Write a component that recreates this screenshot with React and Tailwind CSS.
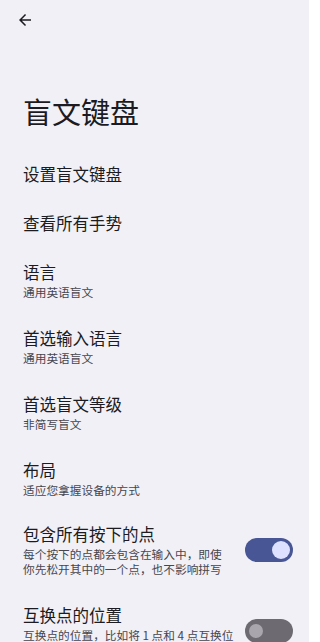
import React from 'react';

const font = { fontFamily: '"Noto Sans CJK SC", "Noto Sans", sans-serif' };

function Toggle({ on }) {
    return on ? (
        <div className="flex h-[24px] w-[48px] shrink-0 items-center justify-end rounded-full bg-[#485695] pr-[3px]">
            <div className="h-[18px] w-[18px] rounded-full bg-[#dde1ff]" />
        </div>
    ) : (
        <div className="flex h-[24px] w-[48px] shrink-0 items-center rounded-full bg-[#6d6a72] pl-[4px]">
            <div className="h-[14px] w-[14px] rounded-full bg-[#a9a6ae]" />
        </div>
    );
}

function Row({ title, sub }) {
    if (!sub) {
        return (
            <div className="py-[12.5px] pl-[23px]">
                <p className="text-[16.5px] leading-[24px] text-[#1b1b21]">{title}</p>
            </div>
        );
    }
    return (
        <div className="py-[14px] pl-[23px]">
            <p className="text-[16.5px] leading-[22px] text-[#1b1b21]">{title}</p>
            <p className="mt-[1px] text-[11.7px] leading-[15px] text-[#46464f]">{sub}</p>
        </div>
    );
}

function ToggleRow({ title, sub, on, textWidth, className }) {
    return (
        <div className={className}>
            <div className="flex items-center justify-between pl-[23px] pr-[16px]">
                <div style={{ width: textWidth }}>
                    <p className="text-[16.5px] leading-[22px] text-[#1b1b21]">{title}</p>
                    <p className="mt-[1px] text-[11.7px] leading-[15px] text-[#46464f]">{sub}</p>
                </div>
                <Toggle on={on} />
            </div>
        </div>
    );
}

export default function App() {
    return (
        <div className="h-[642px] w-[309px] overflow-hidden bg-[#f1f0f6]" style={font}>
            {/* Top bar */}
            <div className="flex h-[40px] items-start pl-[16px] pt-[11px]">
                <svg width="18" height="18" viewBox="0 0 24 24" fill="#1b1b21">
                    <path d="M20 11H7.83l5.59-5.59L12 4l-8 8 8 8 1.41-1.41L7.83 13H20v-2z" />
                </svg>
            </div>

            {/* Title */}
            <h1 className="mt-[53px] pl-[23px] text-[29px] leading-[36px] text-[#1b1b21]">盲文键盘</h1>

            {/* Settings list */}
            <div className="flex flex-col pt-[20px]">
                <Row title="设置盲文键盘" />
                <Row title="查看所有手势" />
                <Row title="语言" sub="通用英语盲文" />
                <Row title="首选输入语言" sub="通用英语盲文" />
                <Row title="首选盲文等级" sub="非简写盲文" />
                <Row title="布局" sub="适应您拿握设备的方式" />
                <ToggleRow
                    className="pt-[12px] pb-[16px]"
                    textWidth={209}
                    title="包含所有按下的点"
                    sub="每个按下的点都会包含在输入中，即使你先松开其中的一个点，也不影响拼写"
                    on
                />
                <ToggleRow
                    className="pt-[12px]"
                    textWidth={216}
                    title="互换点的位置"
                    sub="互换点的位置，比如将 1 点和 4 点互换位置，以及将 2 点和 5 点互换位置"
                />
            </div>
        </div>
    );
}
